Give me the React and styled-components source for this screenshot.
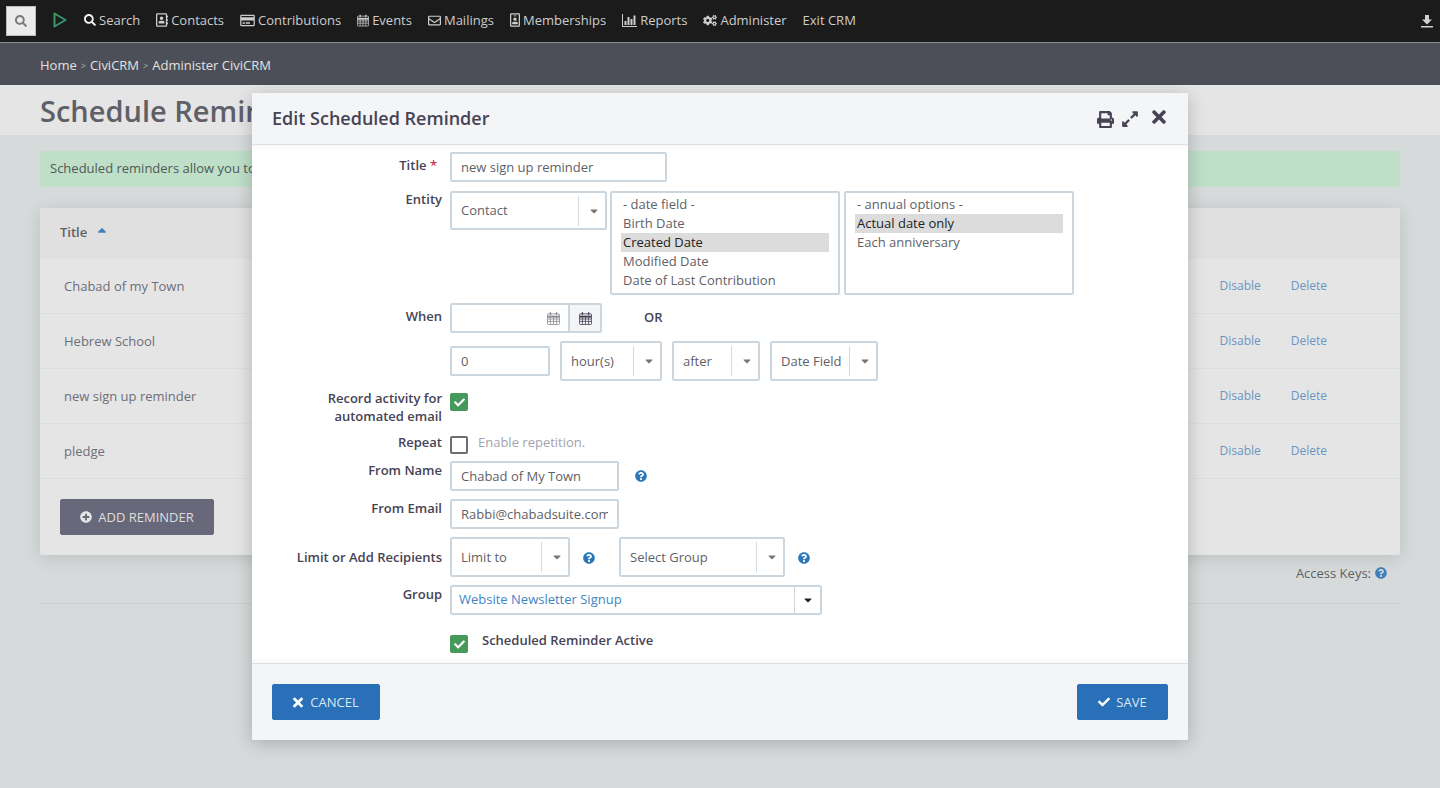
import React from 'react';
import styled, { createGlobalStyle } from 'styled-components';
import {
  FaSearch,
  FaRegAddressBook,
  FaRegCreditCard,
  FaRegEnvelope,
  FaRegIdBadge,
  FaCogs,
  FaPrint,
  FaExpandAlt,
  FaTimes,
  FaCheck,
  FaPlusCircle,
  FaQuestionCircle,
  FaCaretDown,
  FaCaretUp,
} from 'react-icons/fa';

const GlobalStyle = createGlobalStyle`
  html, body {
    margin: 0;
    height: 100%;
    overflow: hidden;
    background: #d6dada;
    font-family: "Open Sans", "Liberation Sans", sans-serif;
    font-size: 13px;
  }
  * { box-sizing: border-box; }
`;

const Page = styled.div`
  height: 788px;
  overflow: hidden;
  position: relative;
  background: #d6dada;
`;

const TopBar = styled.div`
  height: 43px;
  background: #1b1b1b;
  border-bottom: 1px solid #8b8c8c;
  display: flex;
  align-items: center;
  padding: 0 7px 2px 6px;
`;
const SearchBox = styled.div`
  width: 30px;
  height: 30px;
  background: #ebebeb;
  color: #7a7a7a;
  border: 1px solid #bbb;
  display: flex;
  align-items: center;
  justify-content: center;
  font-size: 12px;
  margin: 2px 16px 0 0;
`;
const Logo = styled.svg`
  width: 16px;
  height: 16px;
  margin-right: 16px;
`;
const Menu = styled.nav`
  display: flex;
  align-items: center;
  gap: 16px;
  flex: 1;
`;
const MenuItem = styled.span`
  display: flex;
  align-items: center;
  gap: 3px;
  color: #cdcdcd;
  font-size: 13px;
  svg {
    width: ${(p) => p.$w}px;
    height: ${(p) => p.$h}px;
  }
  &:first-child svg { color: #f0f0f0; }
`;
const DownloadIcon = styled.svg`
  width: 12px;
  height: 13px;
  margin-top: 2px;
`;

const Crumbs = styled.div`
  height: 42px;
  background: #4c4f57;
  display: flex;
  align-items: center;
  padding: 2px 0 0 40px;
  color: #e2e2e2;
  font-size: 13px;
`;
const CrumbSep = styled.span`
  font-size: 9px;
  color: #b5b5b5;
  margin: 0 4px;
`;

const TitleBand = styled.div`
  height: 50px;
  background: #e5e5e5;
  padding: 1px 0 0 40px;
`;
const PageTitle = styled.h1`
  margin: 0;
  font-size: 29px;
  font-weight: 600;
  line-height: 50px;
  color: #5f5f68;
  white-space: nowrap;
`;

const Content = styled.div`
  padding: 16px 40px 0;
`;
const Alert = styled.div`
  height: 36px;
  background: #bfdfc9;
  border-radius: 2px;
  color: #4d5b54;
  padding-left: 10px;
  line-height: 35px;
`;
const Card = styled.div`
  margin-top: 21px;
  background: #e5e5e5;
  border-radius: 2px;
  box-shadow: 0 3px 18px rgba(0, 0, 0, 0.12);
`;
const CardHead = styled.div`
  height: 51px;
  background: #dfe0df;
  padding: 0 0 4px 20px;
  display: flex;
  align-items: center;
  color: #5f5f68;
  font-weight: 600;
  font-size: 13px;
  svg { color: #3f7fbd; margin: 0 0 3px 8px; font-size: 14px; }
`;
const Row = styled.div`
  height: 55px;
  border-bottom: 1px solid #dcdfdf;
  display: flex;
  align-items: center;
  justify-content: space-between;
  padding: 0 73px 0 24px;
  color: #6e6e79;
`;
const RowLinks = styled.div`
  display: flex;
  gap: 30px;
  color: #6996c2;
  font-size: 12px;
  margin-top: -1px;
`;
const CardFoot = styled.div`
  padding: 20px;
  height: 76px;
`;
const Button = styled.button`
  height: 36px;
  width: ${(p) => p.$width}px;
  border: 1px solid ${(p) => p.$bg};
  border-radius: 2px;
  background: ${(p) => p.$bg};
  color: ${(p) => p.$fg};
  font-family: inherit;
  font-size: 13px;
  display: flex;
  align-items: center;
  justify-content: center;
  gap: ${(p) => p.$gap ?? 7}px;
  padding: 0;
  svg {
    color: ${(p) => p.$icon};
    width: ${(p) => p.$iconW ?? 12}px;
    height: ${(p) => p.$iconH ?? 12}px;
  }
`;
const AccessKeys = styled.div`
  display: flex;
  justify-content: flex-end;
  align-items: flex-start;
  gap: 4px;
  padding: 9px 13px 0 0;
  height: 49px;
  color: #5f5f68;
  font-size: 13px;
  border-bottom: 1px solid #cbd0d0;
  svg { color: #3f7fbd; font-size: 12px; margin-top: 3px; }
`;

const Modal = styled.div`
  position: absolute;
  left: 252px;
  top: 93px;
  width: 936px;
  height: 647px;
  border-radius: 2px;
  background: #fff;
  box-shadow: 0 3px 18px rgba(0, 0, 0, 0.22);
  display: flex;
  flex-direction: column;
  overflow: hidden;
`;
const ModalHead = styled.div`
  height: 52px;
  flex: none;
  background: #f4f5f7;
  border-bottom: 1px solid #dbe2e8;
  display: flex;
  align-items: center;
  justify-content: space-between;
  padding: 0 22px 1px 20px;
`;
const ModalTitle = styled.h2`
  margin: 0;
  font-size: 18px;
  font-weight: 600;
  color: #464354;
`;
const ModalTools = styled.div`
  display: flex;
  align-items: center;
  gap: 8px;
  color: #464354;
  svg:nth-child(1) { width: 17px; height: 17px; margin-top: 3px; }
  svg:nth-child(2) { width: 16px; height: 18px; margin-top: 2px; }
  svg:nth-child(3) { width: 14px; height: 20px; margin: -2px 0 0 6px; }
`;
const ModalBody = styled.div`
  flex: 1;
  overflow: hidden;
  padding-top: 7px;
  background: #fff;
  box-shadow: inset 0 8px 8px -8px rgba(0, 0, 0, 0.06), inset 0 -8px 8px -8px rgba(0, 0, 0, 0.06);
`;
const ModalFoot = styled.div`
  height: 77px;
  flex: none;
  background: #f4f5f7;
  border-top: 1px solid #dbe2e8;
  display: flex;
  align-items: center;
  justify-content: space-between;
  padding: 0 20px;
`;

const FormRow = styled.div`
  display: grid;
  grid-template-columns: 190px 1fr;
  column-gap: 8px;
  height: ${(p) => p.$h}px;
  margin-bottom: ${(p) => p.$gap ?? 8}px;
`;
const Label = styled.label`
  text-align: right;
  font-weight: 600;
  font-size: 13px;
  line-height: 18px;
  color: #464354;
  margin-top: ${(p) => p.$top ?? 5}px;
  white-space: nowrap;
`;
const Required = styled.span`
  color: #cf3458;
  margin-right: 5px;
`;
const Controls = styled.div`
  display: flex;
  align-items: ${(p) => p.$align || 'flex-start'};
  gap: ${(p) => p.$gap ?? 10}px;
  padding-top: ${(p) => p.$pad ?? 0}px;
`;
const Input = styled.input`
  width: ${(p) => p.$width}px;
  height: 30px;
  border: 2px solid #ccd6df;
  border-radius: 2px;
  background: #fff;
  padding: 0 9px 1px;
  font-family: inherit;
  font-size: 13px;
  color: #5f5f68;
  outline: none;
`;
const Select = styled.div`
  width: ${(p) => p.$width}px;
  height: ${(p) => p.$h ?? 40}px;
  margin-left: ${(p) => p.$left ?? 0}px;
  border: 2px solid #ccd6df;
  border-radius: 2px;
  background: #fff;
  display: flex;
  align-items: center;
  padding-left: 9px;
  color: #5f5f68;
  font-size: 13px;
  flex: none;
`;
const SelectText = styled.span`
  flex: 1;
  white-space: nowrap;
  margin-top: -1px;
`;
const SelectArrow = styled.span`
  width: 27px;
  height: 30px;
  flex: none;
  border-left: 1px solid #d3dbe1;
  display: flex;
  align-items: center;
  justify-content: center;
  padding-left: 3px;
  color: #777;
  font-size: 12px;
`;
const ListBox = styled.div`
  width: 230px;
  height: 104px;
  margin-left: ${(p) => p.$left ?? 0}px;
  border: 2px solid #ccd6df;
  border-radius: 2px;
  background: #fff;
  padding: 2px 9px;
  flex: none;
`;
const ListOption = styled.div`
  height: 19px;
  line-height: 18px;
  padding-left: 2px;
  color: ${(p) => (p.$on ? '#222' : '#5f5f68')};
  background: ${(p) => (p.$on ? '#dcdcdc' : 'transparent')};
  white-space: nowrap;
`;
const DateGroup = styled.div`
  width: 152px;
  height: 30px;
  display: flex;
  border: 2px solid #ccd6df;
  border-radius: 2px;
`;
const DateField = styled.div`
  width: 116px;
  display: flex;
  align-items: center;
  justify-content: flex-end;
  padding-right: 8px;
  color: #8a8a92;
`;
const DateAddon = styled.div`
  flex: 1;
  background: #f4f5f7;
  border-left: 2px solid #ccd6df;
  display: flex;
  align-items: center;
  justify-content: center;
  color: #464354;
`;
const OrText = styled.span`
  font-weight: 600;
  color: #464354;
  margin-left: 32px;
  line-height: 28px;
`;
const CheckBox = styled.span`
  width: 18px;
  height: 18px;
  border-radius: 2px;
  background: ${(p) => (p.$on ? '#44995b' : '#fff')};
  border: 2px solid ${(p) => (p.$on ? '#44995b' : '#6e6e6e')};
  color: #fff;
  display: flex;
  align-items: center;
  justify-content: center;
  font-size: 11px;
  flex: none;
`;
const Hint = styled.span`
  color: #a3a3ad;
  font-size: 13px;
  margin: -3px 0 0 10px;
  line-height: 18px;
`;
const ActiveLabel = styled.span`
  font-weight: 600;
  color: #464354;
  margin-left: 14px;
  line-height: 10px;
`;
const Help = styled.span`
  color: #2a78b8;
  font-size: 12px;
  display: flex;
  margin-left: ${(p) => p.$left ?? 0}px;
  margin-top: ${(p) => p.$top ?? 0}px;
`;
const GroupSelect = styled.div`
  width: 372px;
  height: 30px;
  border: 2px solid #ccd6df;
  border-radius: 2px;
  display: flex;
  align-items: center;
  padding-left: 7px;
  color: #3f85c4;
  ${SelectText} { margin-top: -3px; }
`;
const GroupArrow = styled.span`
  width: 26px;
  height: 100%;
  border-left: 1px solid #ccd6df;
  display: flex;
  align-items: center;
  justify-content: center;
  color: #222;
  font-size: 12px;
`;

const ChartIcon = () => (
  <svg viewBox="0 0 15 13" fill="currentColor">
    <rect x="0" y="0" width="1" height="12" />
    <rect x="0" y="12" width="15" height="1" />
    <rect x="2.5" y="7" width="2" height="4" />
    <rect x="5.5" y="3" width="2" height="8" />
    <rect x="8.5" y="5" width="2" height="6" />
    <rect x="11.5" y="1.5" width="2" height="9.5" />
  </svg>
);

// FA4-style calendar with the grid showing, the FA5 ones are too solid
const CalendarIcon = () => (
  <svg width="13" height="13" viewBox="0 0 13 13" fill="none" stroke="currentColor" strokeWidth="0.8">
    <rect x="0.5" y="1.8" width="12" height="10.7" rx="0.8" />
    <path d="M0.5 4.6h12" strokeWidth="2" />
    <path d="M0.5 7h12M0.5 9.4h12M3.4 5v7.5M6.5 5v7.5M9.6 5v7.5" />
    <path d="M3.4 0.3v2.6M9.6 0.3v2.6" strokeWidth="1.4" />
  </svg>
);

// react-icons boxes are square, so each menu icon gets its real width and height
const menu = [
  [FaSearch, 'Search', 12, 12],
  [FaRegAddressBook, 'Contacts', 12, 14],
  [FaRegCreditCard, 'Contributions', 15, 13],
  [CalendarIcon, 'Events', 12, 13],
  [FaRegEnvelope, 'Mailings', 13, 13],
  [FaRegIdBadge, 'Memberships', 10, 14],
  [ChartIcon, 'Reports', 15, 13],
  [FaCogs, 'Administer', 14, 11],
  [null, 'Exit CRM'],
];
const reminders = ['Chabad of my Town', 'Hebrew School', 'new sign up reminder', 'pledge'];
const dateFields = ['- date field -', 'Birth Date', 'Created Date', 'Modified Date', 'Date of Last Contribution'];
const annualOptions = ['- annual options -', 'Actual date only', 'Each anniversary'];

const Dropdown = ({ width, h, left, children }) => (
  <Select $width={width} $h={h} $left={left}>
    <SelectText>{children}</SelectText>
    <SelectArrow>
      <FaCaretDown />
    </SelectArrow>
  </Select>
);

const App = () => {
  return (
    <Page>
      <GlobalStyle />
      <TopBar>
        <SearchBox>
          <FaSearch />
        </SearchBox>
        <Logo viewBox="0 0 16 16" fill="none">
          <defs>
            <linearGradient id="play" x1="0" y1="0" x2="1" y2="1">
              <stop offset="0" stopColor="#3f9a5c" />
              <stop offset="1" stopColor="#2b8f83" />
            </linearGradient>
          </defs>
          <path d="M2.5 1.5 L13.5 8 L2.5 14.5 Z" stroke="url(#play)" strokeWidth="2" strokeLinejoin="round" />
        </Logo>
        <Menu>
          {menu.map(([Icon, name, w, h]) => (
            <MenuItem key={name} $w={w} $h={h}>
              {Icon && <Icon />}
              {name}
            </MenuItem>
          ))}
        </Menu>
        <DownloadIcon viewBox="0 0 12 13" fill="#cfcfcf">
          <path d="M4 0h4v4.5h3L6 9.5 1 4.5h3z" />
          <rect x="0" y="11" width="12" height="1.5" />
        </DownloadIcon>
      </TopBar>
      <Crumbs>
        Home<CrumbSep>&gt;</CrumbSep>CiviCRM<CrumbSep>&gt;</CrumbSep>Administer CiviCRM
      </Crumbs>
      <TitleBand>
        <PageTitle>Schedule Reminders</PageTitle>
      </TitleBand>
      <Content>
        <Alert>Scheduled reminders allow you to automatically send messages to contacts.</Alert>
        <Card>
          <CardHead>
            Title
            <FaCaretUp />
          </CardHead>
          {reminders.map((name) => (
            <Row key={name}>
              {name}
              <RowLinks>
                <span>Disable</span>
                <span>Delete</span>
              </RowLinks>
            </Row>
          ))}
          <CardFoot>
            <Button $width={154} $bg="#676879" $fg="#dedede" $icon="#e5e5e5" $gap={6}>
              <FaPlusCircle />
              ADD REMINDER
            </Button>
          </CardFoot>
        </Card>
        <AccessKeys>
          Access Keys:
          <FaQuestionCircle />
        </AccessKeys>
      </Content>

      <Modal>
        <ModalHead>
          <ModalTitle>Edit Scheduled Reminder</ModalTitle>
          <ModalTools>
            <FaPrint />
            <FaExpandAlt />
            <FaTimes />
          </ModalTools>
        </ModalHead>
        <ModalBody>
          <FormRow $h={30} $gap={9}>
            <Label $top={4}>
              Title <Required>*</Required>
            </Label>
            <Controls>
              <Input $width={217} defaultValue="new sign up reminder" />
            </Controls>
          </FormRow>
          <FormRow $h={104}>
            <Label $top={-1}>Entity</Label>
            <Controls $gap={3}>
              <Dropdown width={157} h={39}>
                Contact
              </Dropdown>
              <ListBox>
                {dateFields.map((o) => (
                  <ListOption key={o} $on={o === 'Created Date'}>
                    {o}
                  </ListOption>
                ))}
              </ListBox>
              <ListBox $left={1}>
                {annualOptions.map((o) => (
                  <ListOption key={o} $on={o === 'Actual date only'}>
                    {o}
                  </ListOption>
                ))}
              </ListBox>
            </Controls>
          </FormRow>
          <FormRow $h={30}>
            <Label $top={4}>When</Label>
            <Controls $gap={10}>
              <DateGroup>
                <DateField>
                  <CalendarIcon />
                </DateField>
                <DateAddon>
                  <CalendarIcon />
                </DateAddon>
              </DateGroup>
              <OrText>OR</OrText>
            </Controls>
          </FormRow>
          <FormRow $h={40} $gap={9}>
            <span />
            <Controls $align="center">
              <Input $width={100} defaultValue="0" />
              <Dropdown width={102}>hour(s)</Dropdown>
              <Dropdown width={88}>after</Dropdown>
              <Dropdown width={108}>Date Field</Dropdown>
            </Controls>
          </FormRow>
          <FormRow $h={38} $gap={6}>
            <Label $top={-1}>
              Record activity for
              <br />
              automated email
            </Label>
            <Controls $pad={3}>
              <CheckBox $on>
                <FaCheck />
              </CheckBox>
            </Controls>
          </FormRow>
          <FormRow $h={23} $gap={4}>
            <Label $top={-1}>Repeat</Label>
            <Controls $gap={0} $pad={2}>
              <CheckBox />
              <Hint>Enable repetition.</Hint>
            </Controls>
          </FormRow>
          <FormRow $h={30}>
            <Label $top={0}>From Name</Label>
            <Controls $align="center" $gap={16}>
              <Input $width={169} defaultValue="Chabad of My Town" />
              <Help>
                <FaQuestionCircle />
              </Help>
            </Controls>
          </FormRow>
          <FormRow $h={30}>
            <Label $top={0}>From Email</Label>
            <Controls>
              <Input $width={169} defaultValue="Rabbi@chabadsuite.com" />
            </Controls>
          </FormRow>
          <FormRow $h={40}>
            <Label $top={11}>Limit or Add Recipients</Label>
            <Controls $align="center" $gap={0}>
              <Dropdown width={120}>Limit to</Dropdown>
              <Help $left={13} $top={2}>
                <FaQuestionCircle />
              </Help>
              <Dropdown width={166} left={24}>
                Select Group
              </Dropdown>
              <Help $left={13} $top={2}>
                <FaQuestionCircle />
              </Help>
            </Controls>
          </FormRow>
          <FormRow $h={30} $gap={20}>
            <Label $top={0}>Group</Label>
            <Controls>
              <GroupSelect>
                <SelectText>Website Newsletter Signup</SelectText>
                <GroupArrow>
                  <FaCaretDown />
                </GroupArrow>
              </GroupSelect>
            </Controls>
          </FormRow>
          <FormRow $h={22} $gap={0}>
            <span />
            <Controls $gap={0}>
              <CheckBox $on>
                <FaCheck />
              </CheckBox>
              <ActiveLabel>Scheduled Reminder Active</ActiveLabel>
            </Controls>
          </FormRow>
        </ModalBody>
        <ModalFoot>
          <Button $width={108} $bg="#2a70b8" $fg="#dbe8f5" $icon="#fff" $iconW={10} $iconH={15}>
            <FaTimes />
            CANCEL
          </Button>
          <Button $width={91} $bg="#2a70b8" $fg="#dbe8f5" $icon="#fff" $gap={6}>
            <FaCheck />
            SAVE
          </Button>
        </ModalFoot>
      </Modal>
    </Page>
  );
};

export default App;
